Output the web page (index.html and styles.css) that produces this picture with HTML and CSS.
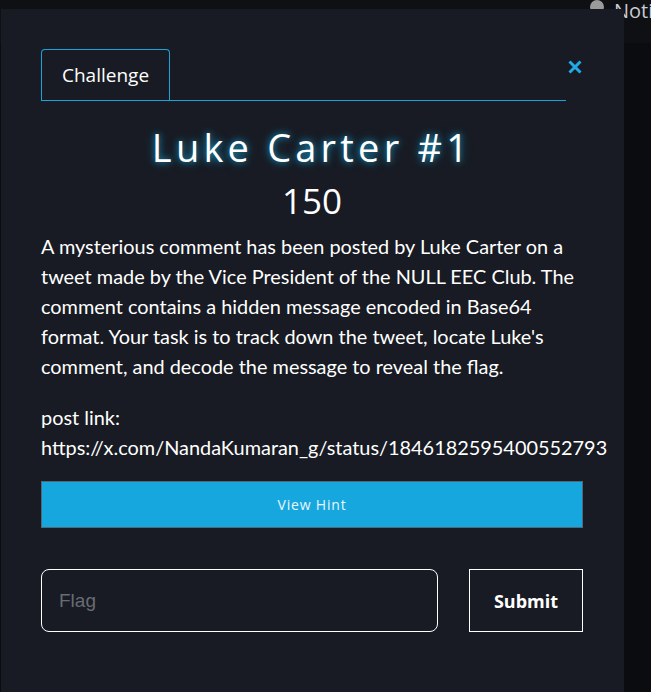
FILE: index.html
```html
<!DOCTYPE html>
<html lang="en">
<head>
<meta charset="utf-8">
<title>Luke Carter #1</title>
<link rel="stylesheet" href="styles.css">
</head>
<body>
<header class="topbar">
  <span class="avatar"></span>
  <span class="notif">Notifications</span>
</header>
<main class="page"></main>

<div class="modal">
  <div class="tabrow">
    <ul class="tabs">
      <li class="tab">Challenge</li>
    </ul>
    <button class="close" aria-label="Close">
      <svg width="16" height="16" viewBox="0 0 16 16"><path d="M2.5 2.5 L13.5 13.5 M13.5 2.5 L2.5 13.5" stroke="#22a9e6" stroke-width="3" stroke-linecap="butt" fill="none"/></svg>
    </button>
  </div>

  <h1 class="title">Luke Carter #1</h1>
  <div class="points">150</div>

  <p class="desc">A mysterious comment has been posted by Luke Carter on a tweet made by the Vice President of the NULL EEC Club. The comment contains a hidden message encoded in Base64 format. Your task is to track down the tweet, locate Luke's comment, and decode the message to reveal the flag.</p>
  <p class="desc link">post link: <span class="url">https://x.com/NandaKumaran_g/status/1846182595400552793</span></p>

  <button class="hint">View Hint</button>

  <form class="flagrow">
    <input class="flag" type="text" placeholder="Flag">
    <button class="submit" type="button">Submit</button>
  </form>
</div>
</body>
</html>
```

FILE: styles.css
```css
* { box-sizing: border-box; }

html, body {
  margin: 0;
  height: 100%;
}

body {
  background: #0a0c0f;
  font-family: "Open Sans", "DejaVu Sans", sans-serif;
  color: #ffffff;
  overflow: hidden;
}

.topbar {
  height: 43px;
  background: #0e1014;
  display: flex;
  align-items: flex-start;
  padding-left: 590px;
  gap: 10px;
  white-space: nowrap;
  overflow: hidden;
}

.avatar {
  width: 14px;
  height: 14px;
  border-radius: 50%;
  background: #9b9b9b;
  margin-top: 0;
  flex: none;
}

.notif {
  font-size: 20px;
  line-height: 22px;
  color: #c9ccd1;
}

.page {
  height: 649px;
}

.modal {
  position: fixed;
  left: 1px;
  top: 9px;
  width: 623px;
  bottom: 0;
  background: #181b23;
  padding: 40px 40px 0 40px;
  display: flex;
  flex-direction: column;
}

.tabrow {
  display: flex;
  align-items: flex-start;
  width: 542px;
}

.tabs {
  list-style: none;
  margin: 0;
  padding: 0;
  width: 525px;
  border-bottom: 1px solid #17a3dc;
  display: flex;
}

.tab {
  border: 1px solid #17a3dc;
  border-bottom: none;
  border-radius: 4px 4px 0 0;
  height: 51px;
  padding: 0 20px;
  font-size: 19px;
  line-height: 50px;
  color: #ffffff;
}

.close {
  margin-left: auto;
  margin-top: 10px;
  background: none;
  border: none;
  padding: 0;
  width: 16px;
  height: 16px;
  display: block;
}

.close svg { display: block; }

.title {
  margin: 23px 0 0 0;
  text-align: center;
  font-size: 38px;
  line-height: 46px;
  font-weight: 400;
  letter-spacing: 4.2px;
  width: 542px;
  color: #ffffff;
  text-shadow: 0 0 6px rgba(23, 167, 223, 0.8), 0 0 12px rgba(23, 167, 223, 0.45);
}

.points {
  margin-top: 11px;
  text-align: center;
  width: 542px;
  font-size: 35px;
  line-height: 40px;
}

.desc {
  margin: 10px 0 0 0;
  width: 542px;
  font-family: "Lato", "Open Sans", sans-serif;
  font-size: 19.9px;
  line-height: 30px;
  color: #ffffff;
}

.link {
  margin-top: 21px;
}

.url { white-space: nowrap; }

.hint {
  margin-top: 19px;
  width: 542px;
  height: 47px;
  background: #17a7df;
  border: 1px solid #50687c;
  color: #eaf6fc;
  font-family: "Open Sans", sans-serif;
  font-size: 14px;
  letter-spacing: 0.8px;
}

.flagrow {
  margin: 41px 0 0 0;
  display: flex;
  gap: 31px;
  width: 542px;
}

.flag {
  width: 397px;
  height: 63px;
  border: 1px solid #ffffff;
  border-radius: 8px;
  background: transparent;
  padding: 0 17px;
  font-family: "Liberation Sans", Arial, sans-serif;
  font-size: 19px;
  color: #ffffff;
  outline: none;
}

.flag::placeholder { color: #676c74; }

.submit {
  width: 114px;
  height: 63px;
  border: 1px solid #ffffff;
  background: transparent;
  color: #ffffff;
  font-family: "Open Sans", sans-serif;
  font-weight: 700;
  font-size: 18px;
  padding: 0;
}
```
